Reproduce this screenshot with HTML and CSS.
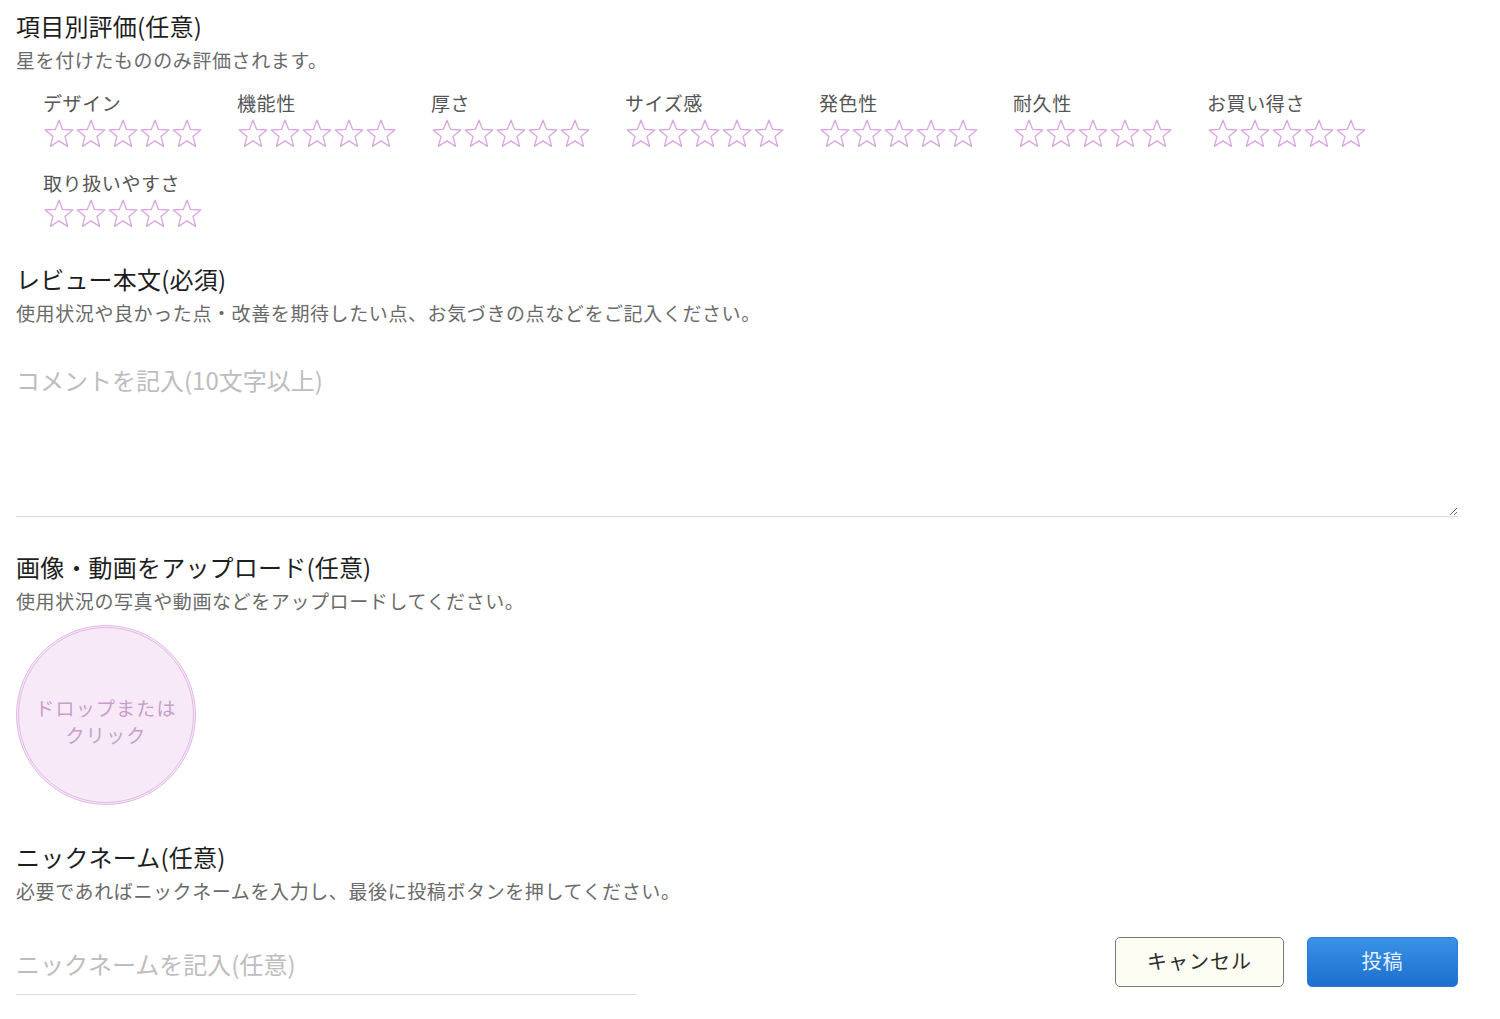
FILE: index.html
```html
<!DOCTYPE html>
<html lang="ja">
<head>
<meta charset="utf-8">
<title>レビュー投稿</title>
<link rel="stylesheet" href="styles.css">
</head>
<body>
<svg width="0" height="0" class="defs" aria-hidden="true">
  <defs>
    <symbol id="star" viewBox="0 0 32 32">
      <path d="M16 2.2 L19.7 11.4 L29.8 12 L22 18.4 L24.6 28.4 L16 22.9 L7.4 28.4 L10 18.4 L2.2 12 L12.3 11.4 Z" fill="none" stroke="#d9a6df" stroke-width="1.3" stroke-linejoin="round"/>
    </symbol>
  </defs>
</svg>
<main class="page">
  <section class="section">
    <h2 class="title">項目別評価(任意)</h2>
    <p class="desc">星を付けたもののみ評価されます。</p>
    <div class="ratings">
      <div class="rating"><div class="label">デザイン</div><div class="stars"><svg><use href="#star"/></svg><svg><use href="#star"/></svg><svg><use href="#star"/></svg><svg><use href="#star"/></svg><svg><use href="#star"/></svg></div></div>
      <div class="rating"><div class="label">機能性</div><div class="stars"><svg><use href="#star"/></svg><svg><use href="#star"/></svg><svg><use href="#star"/></svg><svg><use href="#star"/></svg><svg><use href="#star"/></svg></div></div>
      <div class="rating"><div class="label">厚さ</div><div class="stars"><svg><use href="#star"/></svg><svg><use href="#star"/></svg><svg><use href="#star"/></svg><svg><use href="#star"/></svg><svg><use href="#star"/></svg></div></div>
      <div class="rating"><div class="label">サイズ感</div><div class="stars"><svg><use href="#star"/></svg><svg><use href="#star"/></svg><svg><use href="#star"/></svg><svg><use href="#star"/></svg><svg><use href="#star"/></svg></div></div>
      <div class="rating"><div class="label">発色性</div><div class="stars"><svg><use href="#star"/></svg><svg><use href="#star"/></svg><svg><use href="#star"/></svg><svg><use href="#star"/></svg><svg><use href="#star"/></svg></div></div>
      <div class="rating"><div class="label">耐久性</div><div class="stars"><svg><use href="#star"/></svg><svg><use href="#star"/></svg><svg><use href="#star"/></svg><svg><use href="#star"/></svg><svg><use href="#star"/></svg></div></div>
      <div class="rating"><div class="label">お買い得さ</div><div class="stars"><svg><use href="#star"/></svg><svg><use href="#star"/></svg><svg><use href="#star"/></svg><svg><use href="#star"/></svg><svg><use href="#star"/></svg></div></div>
      <div class="rating"><div class="label">取り扱いやすさ</div><div class="stars"><svg><use href="#star"/></svg><svg><use href="#star"/></svg><svg><use href="#star"/></svg><svg><use href="#star"/></svg><svg><use href="#star"/></svg></div></div>
    </div>
  </section>

  <section class="section review">
    <h2 class="title">レビュー本文(必須)</h2>
    <p class="desc">使用状況や良かった点・改善を期待したい点、お気づきの点などをご記入ください。</p>
    <textarea class="comment" placeholder="コメントを記入(10文字以上)"></textarea>
  </section>

  <section class="section upload">
    <h2 class="title">画像・動画をアップロード(任意)</h2>
    <p class="desc">使用状況の写真や動画などをアップロードしてください。</p>
    <div class="drop"><span>ドロップまたは<br>クリック</span></div>
  </section>

  <section class="section nickname">
    <h2 class="title">ニックネーム(任意)</h2>
    <p class="desc">必要であればニックネームを入力し、最後に投稿ボタンを押してください。</p>
    <div class="bottom">
      <input class="nick" type="text" placeholder="ニックネームを記入(任意)">
      <div class="buttons">
        <button class="btn cancel" type="button">キャンセル</button>
        <button class="btn submit" type="button">投稿</button>
      </div>
    </div>
  </section>
</main>
</body>
</html>
```

FILE: styles.css
```css
html, body {
  margin: 0;
  padding: 0;
  background: #fff;
}
body {
  font-family: "Noto Sans CJK JP", "Noto Sans", sans-serif;
  color: #222;
}
.defs {
  position: absolute;
  width: 0;
  height: 0;
}
.page {
  width: 1442px;
  padding: 9px 42px 0 16px;
}
.section {
  margin: 0;
}
.title {
  margin: 0;
  font-size: 24px;
  font-weight: 400;
  line-height: 34px;
  color: #1e1e1e;
  letter-spacing: 0.2px;
}
.desc {
  margin: 0;
  font-size: 19px;
  line-height: 34px;
  color: #6a6a6a;
  letter-spacing: 0.6px;
}
.ratings {
  display: flex;
  flex-wrap: wrap;
  padding-left: 27px;
  margin-top: 13px;
  row-gap: 20px;
  width: 1390px;
}
.rating {
  width: 194px;
}
.label {
  font-size: 19px;
  line-height: 26px;
  color: #555;
  letter-spacing: 0.6px;
  margin-bottom: 2px;
}
.stars {
  display: flex;
  height: 32px;
}
.stars svg {
  width: 32px;
  height: 32px;
  flex: none;
}
.review {
  margin-top: 32px;
}
.comment {
  display: block;
  box-sizing: border-box;
  width: 1442px;
  height: 178px;
  margin-top: 9px;
  padding: 24px 0 0 0;
  border: none;
  border-bottom: 1px solid #dcdcdc;
  font-family: "Noto Sans CJK JP", "Noto Sans", sans-serif;
  font-size: 24px;
  line-height: 34px;
  color: #333;
  resize: vertical;
  outline: none;
  background: #fff;
}
.comment::placeholder,
.nick::placeholder {
  color: #bdbdbd;
}
.upload {
  margin-top: 33px;
}
.drop {
  box-sizing: border-box;
  width: 180px;
  height: 180px;
  margin-top: 7px;
  padding-top: 12px;
  border-radius: 50%;
  border: 3px double #e2b9e4;
  background: #f7e9f7;
  display: flex;
  align-items: center;
  justify-content: center;
  text-align: center;
}
.drop span {
  font-size: 19px;
  line-height: 27px;
  color: #c79ecb;
  letter-spacing: 1.2px;
}
.nickname {
  margin-top: 35px;
}
.bottom {
  display: flex;
  justify-content: space-between;
  align-items: flex-start;
  margin-top: 21px;
}
.nick {
  box-sizing: border-box;
  width: 620px;
  height: 66px;
  padding: 17px 0 14px 0;
  border: none;
  border-bottom: 1px solid #dcdcdc;
  font-family: "Noto Sans CJK JP", "Noto Sans", sans-serif;
  font-size: 24px;
  line-height: 34px;
  outline: none;
  background: #fff;
}
.buttons {
  display: flex;
  gap: 23px;
  margin-top: 8px;
}
.btn {
  height: 50px;
  padding: 0 0 3px 0;
  border-radius: 5px;
  font-family: "Noto Sans CJK JP", "Noto Sans", sans-serif;
  font-size: 20px;
  letter-spacing: 1px;
  cursor: pointer;
}
.cancel {
  width: 169px;
  background: #fdfdf4;
  border: 1px solid #7a7a7a;
  color: #2a2a2a;
}
.submit {
  width: 151px;
  background: linear-gradient(#3a92e6, #1c6fcf);
  border: 1px solid #2a7ad6;
  color: #e6f1ff;
}
```
